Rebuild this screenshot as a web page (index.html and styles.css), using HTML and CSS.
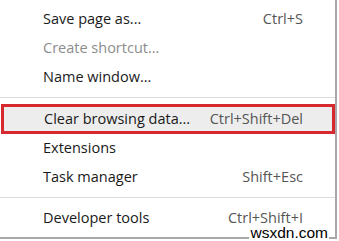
FILE: index.html
```html
<!DOCTYPE html>
<html lang="en">
<head>
  <meta charset="UTF-8"/>
  <title>Menu</title>
  <link rel="stylesheet" href="styles.css">
</head>
<body>

  <div class="menu">
    <div class="item"><span>Save page as...</span><span class="key">Ctrl+S</span></div>
    <div class="item disabled"><span>Create shortcut...</span></div>
    <div class="item"><span>Name window...</span></div>
    <div class="sep"></div>
    <div class="item marked"><span>Clear browsing data...</span><span class="key">Ctrl+Shift+Del</span></div>
    <div class="item"><span>Extensions</span></div>
    <div class="item"><span>Task manager</span><span class="key">Shift+Esc</span></div>
    <div class="sep"></div>
    <div class="item"><span>Developer tools</span><span class="key">Ctrl+Shift+I</span></div>
  </div>

  <div class="mark">wsxdn.com</div>

</body>
</html>
```

FILE: styles.css
```css
* {
  margin: 0;
  padding: 0;
  box-sizing: border-box;
}

body {
  width: 339px;
  height: 241px;
  background: #fff;
  font-family: 'Open Sans', sans-serif;
  color: #1a1a1a;
  position: relative;
  overflow: hidden;
}

.menu {
  width: 337px;
  padding: 5px 0 4px;
  background: #fff;
  border-right: 2px solid #a8a8a8;
  border-bottom: 2px solid #a8a8a8;
}

.item {
  height: 29px;
  display: flex;
  align-items: center;
  justify-content: space-between;
  padding: 0 32px 0 43px;
  font-size: 14.5px;
  line-height: 1;
}

.item.disabled {
  color: #8c8c8c;
}

.key {
  color: #555;
}

.item.marked {
  margin: 0 0 0 1px;
  padding-left: 40px;
  padding-right: 29px;
  height: 30px;
  background: #ededed;
  border: 3px solid #d72830;
}

.sep {
  height: 1px;
  background: #dcdcdc;
  margin: 5px 0 6px;
}

.mark {
  position: absolute;
  right: 10px;
  bottom: 2px;
  padding: 0 1px;
  background: #fff;
  font-family: 'Liberation Sans', sans-serif;
  font-size: 15.5px;
  line-height: 12px;
  color: #000;
}
```
